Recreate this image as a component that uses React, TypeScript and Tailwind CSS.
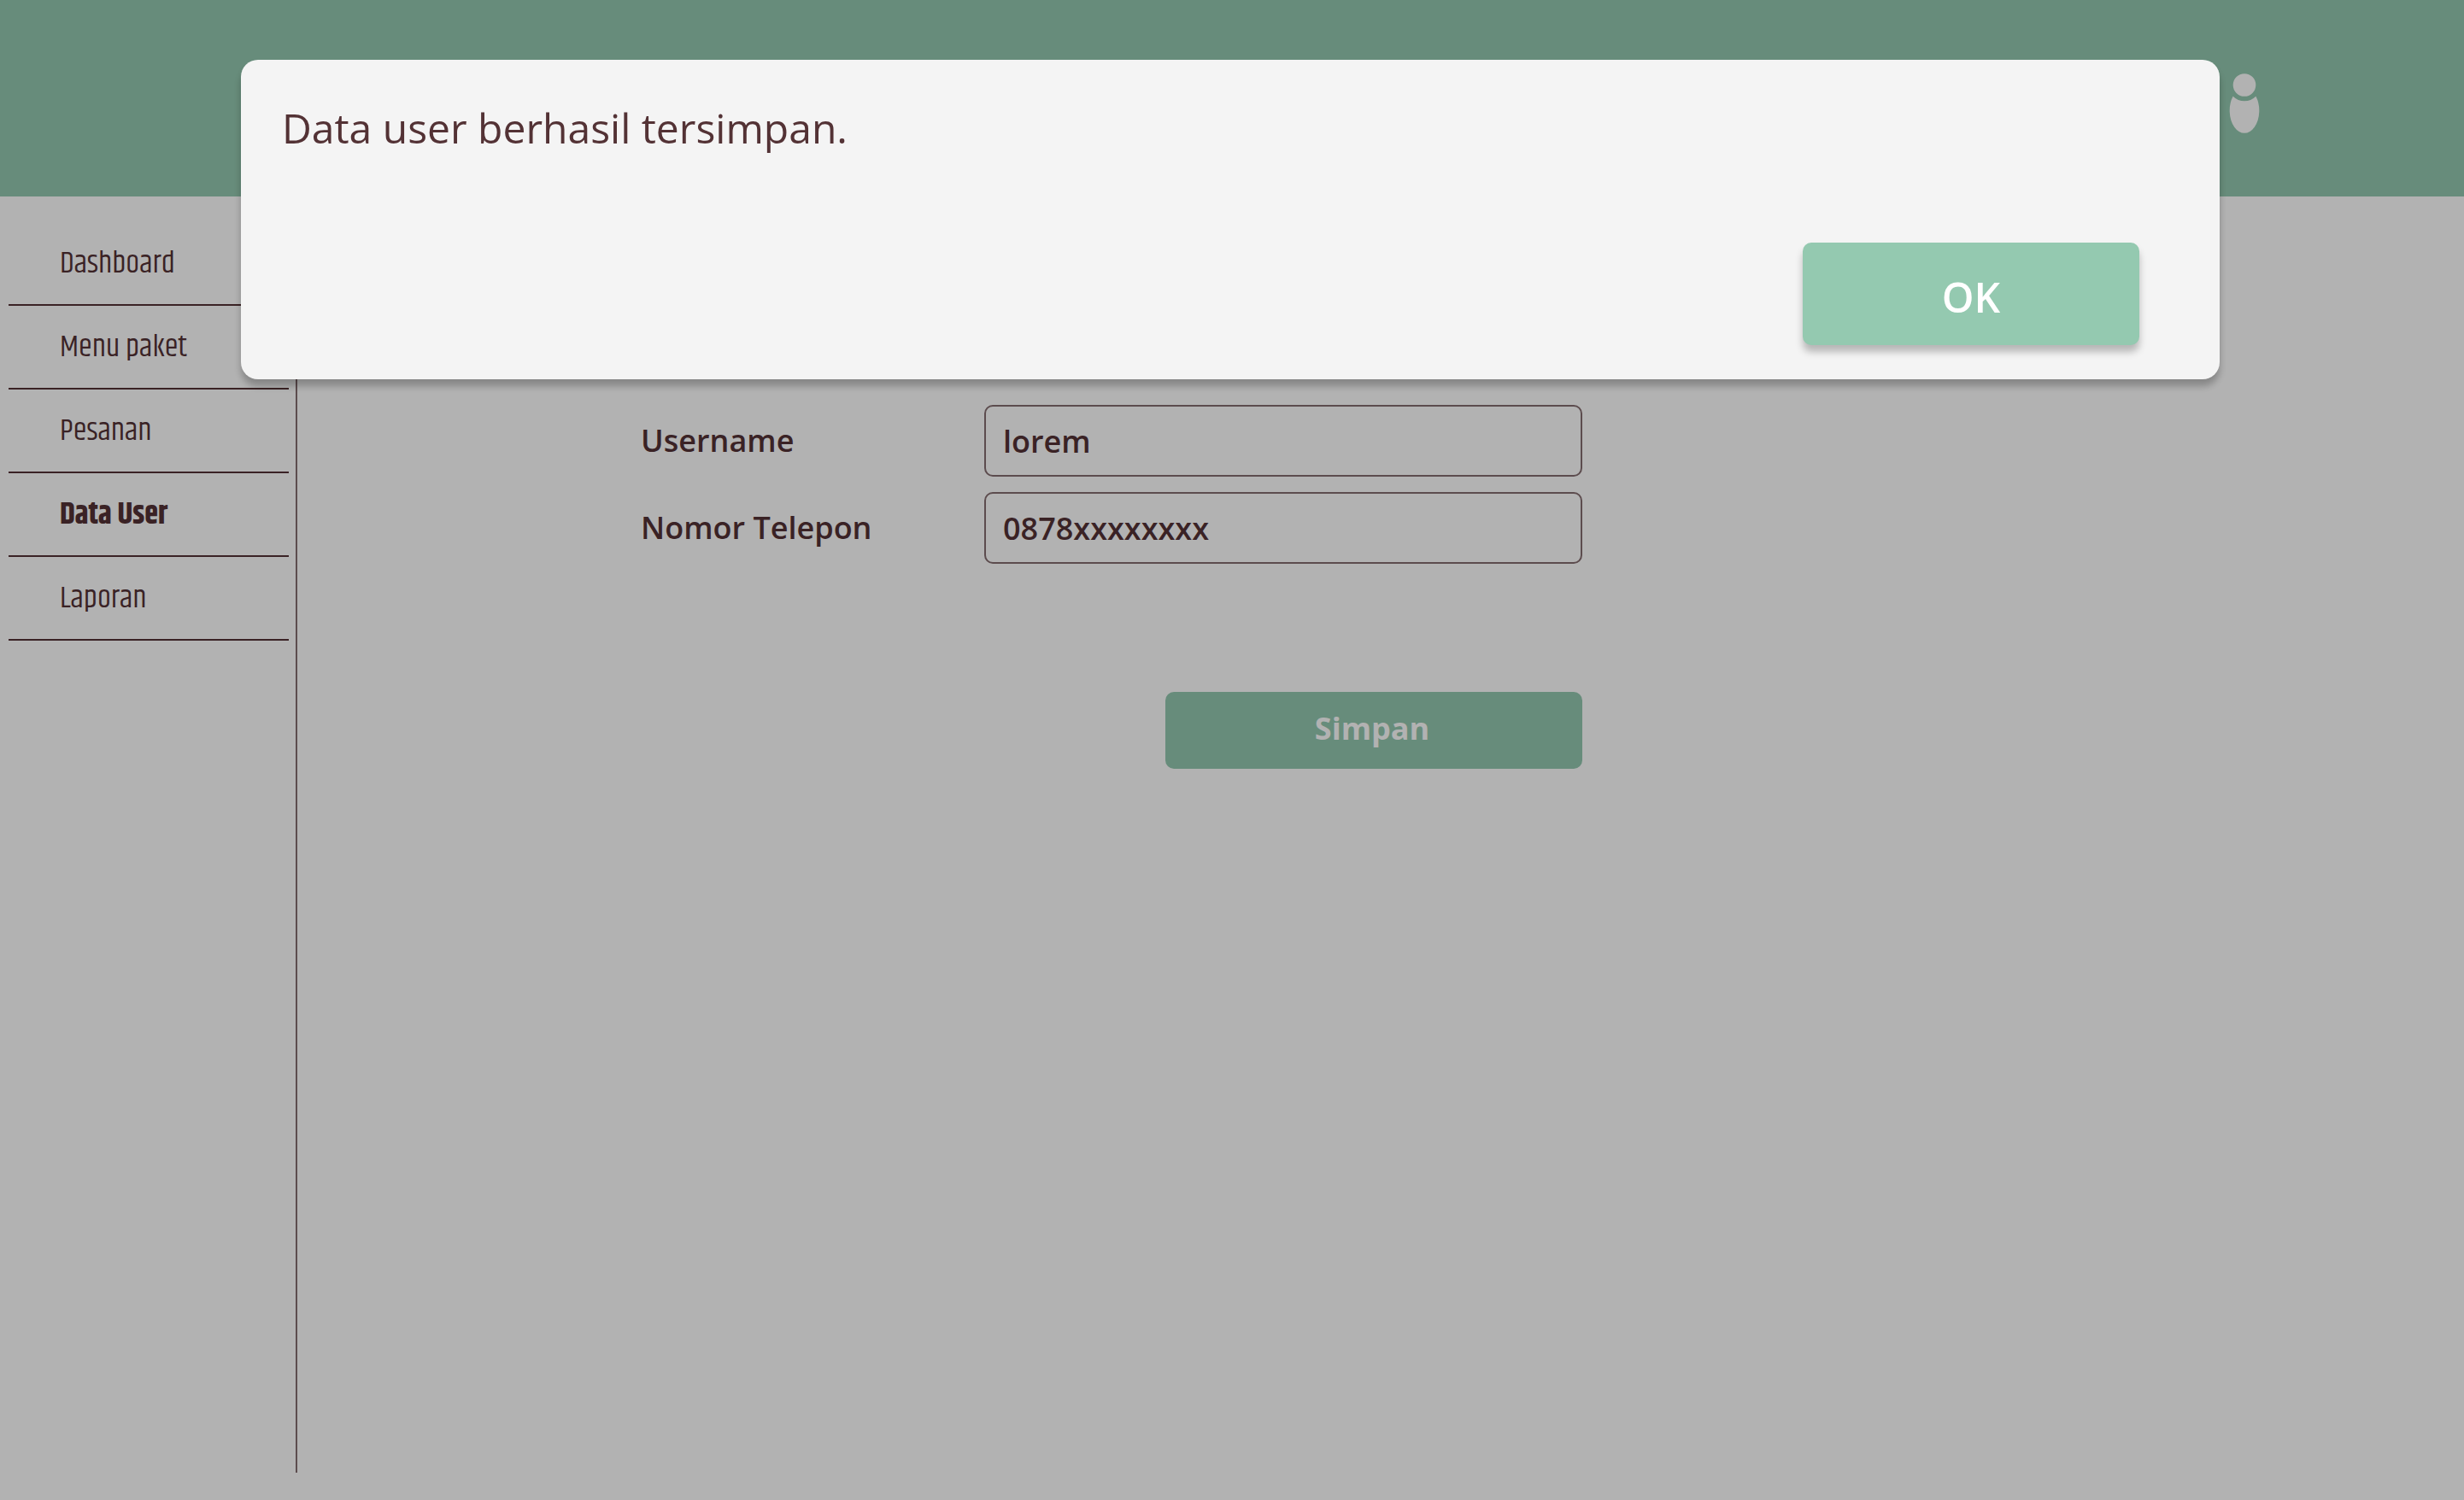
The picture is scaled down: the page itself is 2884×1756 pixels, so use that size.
const menu = [
  { label: "Dashboard" },
  { label: "Menu paket" },
  { label: "Pesanan" },
  { label: "Data User", active: true },
  { label: "Laporan" },
];

const fields = [
  { id: "username", label: "Username", value: "lorem" },
  { id: "phone", label: "Nomor Telepon", value: "0878xxxxxxxx" },
];

function UserIcon() {
  return (
    <svg viewBox="0 0 36 70" className="h-[70px] w-9" fill="currentColor" aria-hidden="true">
      <circle cx="18" cy="13.5" r="13.3" />
      <path d="M4.6 26.8A19 19 0 0 0 31.4 26.8A17.3 26.3 0 1 1 4.6 26.8Z" />
    </svg>
  );
}

function Sidebar() {
  return (
    <nav className="mb-8 w-[348px] shrink-0 border-r-2 border-[#856d70] pt-[30px] pr-2 pl-2.5 font-['Khand',sans-serif] text-4xl">
      <ul>
        {menu.map((item) => (
          <li key={item.label} className="border-b-2 border-[#533235]">
            <a
              href="#"
              aria-current={item.active ? "page" : undefined}
              className={item.active ? "flex h-24 items-center pt-0.5 pl-[60px] font-bold" : "flex h-24 items-center pt-0.5 pl-[60px]"}
            >
              {item.label}
            </a>
          </li>
        ))}
      </ul>
    </nav>
  );
}

function UserForm() {
  return (
    <form className="grid grid-cols-[402px_700px] content-start gap-y-[18px] pt-[244px] pl-[402px] text-4xl font-semibold">
      {fields.map((f) => (
        <div key={f.id} className="col-span-2 grid grid-cols-subgrid items-center">
          <label htmlFor={f.id}>{f.label}</label>
          <input
            id={f.id}
            defaultValue={f.value}
            className="h-[84px] rounded-[10px] border-2 border-[#856d70] bg-transparent px-5"
          />
        </div>
      ))}
      <button
        type="button"
        className="col-start-2 mt-[132px] h-[90px] w-[488px] justify-self-end rounded-[10px] bg-[#94c9b0] pr-1 pb-1 font-bold text-white"
      >
        Simpan
      </button>
    </form>
  );
}

function SavedDialog() {
  return (
    <div className="fixed inset-0 flex items-start bg-black/30 pt-[70px] pr-[286px] pl-[282px]">
      <div
        role="dialog"
        aria-modal="true"
        aria-labelledby="dialog-message"
        className="flex grow flex-col rounded-[20px] bg-[#f4f4f4] pt-12 pr-[94px] pb-10 pl-12 text-5xl shadow-[0_8px_8px_rgba(0,0,0,0.25)]"
      >
        <p id="dialog-message" className="leading-16">
          Data user berhasil tersimpan.
        </p>
        <button
          type="button"
          className="mt-[102px] h-[120px] w-[394px] self-end rounded-[10px] bg-[#94c9b0] pt-2 font-semibold text-white shadow-[0_8px_8px_rgba(0,0,0,0.25)]"
        >
          OK
        </button>
      </div>
    </div>
  );
}

export default function App() {
  return (
    <div className="flex min-h-screen flex-col bg-white font-['Open_Sans',sans-serif] text-[#533235]">
      <header className="flex h-[230px] shrink-0 justify-end bg-[#94c9b0] pt-[86px] pr-[239px] text-white">
        <button type="button" aria-label="Akun" className="h-[70px] w-9">
          <UserIcon />
        </button>
      </header>
      <div className="flex grow">
        <Sidebar />
        <main className="grow">
          <UserForm />
        </main>
      </div>
      <SavedDialog />
    </div>
  );
}
